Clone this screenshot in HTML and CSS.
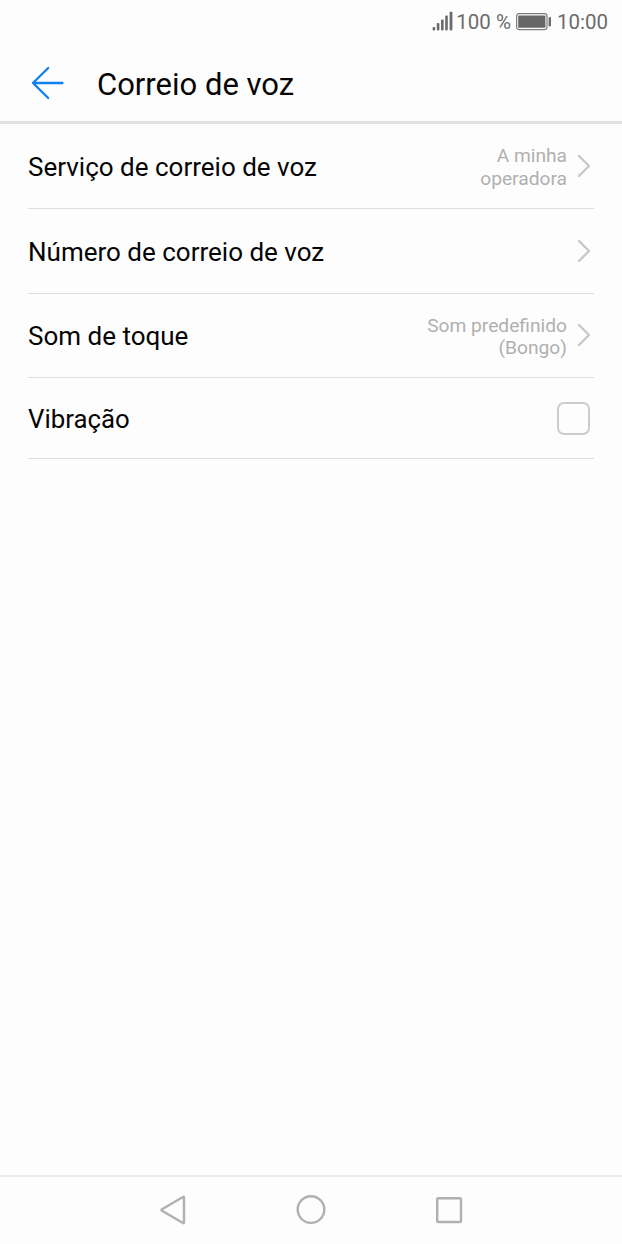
FILE: index.html
```
<!DOCTYPE html>
<html lang="pt">
<head>
  <meta charset="UTF-8" />
  <meta name="viewport" content="width=device-width, initial-scale=1.0" />
  <title>Correio de voz</title>
  <link rel="stylesheet" href="styles.css">
</head>
<body>
  <div class="screen">
    <div class="status-bar">
      <svg class="signal" width="22" height="20" viewBox="0 0 22 20" fill="#6b6b6b">
        <rect x="0.6" y="16" width="2.6" height="3.4" rx="0.8" />
        <rect x="4.8" y="12" width="2.6" height="7.4" rx="0.8" />
        <rect x="9" y="8.4" width="2.6" height="11" rx="0.8" />
        <rect x="13.2" y="4.6" width="2.6" height="14.8" rx="0.8" />
        <rect x="17.6" y="0.8" width="2.8" height="18.6" rx="0.8" />
      </svg>
      <span class="percent">100 %</span>
      <svg class="battery" width="36" height="18" viewBox="0 0 36 18">
        <rect x="0.6" y="0.6" width="30.4" height="16" rx="2.5" fill="none" stroke="#7c7c7c" stroke-width="1.2" />
        <rect x="2.2" y="2.4" width="27.2" height="12.4" rx="0.8" fill="#666" />
        <rect x="32.6" y="4" width="2.4" height="9.4" rx="1" fill="#6b6b6b" />
      </svg>
      <span class="clock">10:00</span>
    </div>

    <header class="header">
      <svg class="back" width="34" height="34" viewBox="0 0 34 34" fill="none" stroke="#107ff0" stroke-width="2.3" stroke-linecap="round" stroke-linejoin="round">
        <path d="M17.2 2L2 17L17.2 32M2 17H31.5" />
      </svg>
      <h1>Correio de voz</h1>
    </header>

    <main class="list">
      <div class="row">
        <span class="label">Serviço de correio de voz</span>
        <span class="value">A minha<br>operadora</span>
        <svg class="chevron" width="14" height="24" viewBox="0 0 14 24"><path d="M2 2L12 12L2 22" /></svg>
      </div>
      <div class="row">
        <span class="label">Número de correio de voz</span>
        <svg class="chevron" width="14" height="24" viewBox="0 0 14 24"><path d="M2 2L12 12L2 22" /></svg>
      </div>
      <div class="row">
        <span class="label">Som de toque</span>
        <span class="value">Som predefinido<br>(Bongo)</span>
        <svg class="chevron" width="14" height="24" viewBox="0 0 14 24"><path d="M2 2L12 12L2 22" /></svg>
      </div>
      <div class="row short">
        <span class="label">Vibração</span>
        <span class="checkbox"></span>
      </div>
    </main>

    <nav class="nav-bar">
      <svg width="30" height="32" viewBox="0 0 30 32"><path d="M26 3.4V28.6Q26 29.6 25 29L4 16.7Q3 16 4 15.3L25 3Q26 2.4 26 3.4Z" /></svg>
      <svg width="32" height="32" viewBox="0 0 32 32"><circle cx="16" cy="15.6" r="13.3" /></svg>
      <svg width="30" height="32" viewBox="0 0 30 32"><rect x="3.2" y="4.2" width="23.8" height="23.8" rx="1" /></svg>
    </nav>
  </div>
</body>
</html>
```
FILE: styles.css
```
* {
  box-sizing: border-box;
}
body {
  margin: 0;
  font-family: Roboto, sans-serif;
  background: #fdfdfd;
  color: #050505;
}
svg {
  display: block;
  flex: none;
}
.screen {
  display: flex;
  flex-direction: column;
  height: 1244px;
}
.status-bar {
  display: flex;
  align-items: center;
  justify-content: flex-end;
  height: 44px;
  padding-right: 14px;
  font-size: 20.5px;
  color: #6b6b6b;
}
.signal {
  margin: 0 2px 3px 0;
}
.battery {
  margin: 0 5px;
}
.header {
  display: flex;
  align-items: center;
  height: 80px;
  padding: 0 31px;
  border-bottom: 3px solid #e1e1e1;
}
h1 {
  margin: 3px 0 0 32px;
  font-size: 31px;
  font-weight: 400;
}
.list {
  flex: 1;
  padding: 0 28px;
}
.row {
  display: flex;
  align-items: center;
  height: 84.8px;
  padding-right: 3px;
  border-bottom: 1px solid #dedede;
}
.row.short {
  height: 80.6px;
  padding-right: 4px;
}
.label {
  flex: 1;
  padding-top: 2px;
  font-size: 26px;
}
.value {
  margin-right: 10px;
  padding-top: 4px;
  font-size: 19.2px;
  line-height: 22.5px;
  text-align: right;
  color: #b0b0b0;
}
.chevron {
  fill: none;
  stroke: #c8c8c8;
  stroke-width: 2.4;
  stroke-linecap: round;
  stroke-linejoin: round;
}
.short .label {
  padding-top: 1px;
  font-size: 25.8px;
}
.checkbox {
  width: 33px;
  height: 33px;
  border: 2px solid #ccc;
  border-radius: 7px;
}
.nav-bar {
  display: flex;
  align-items: center;
  justify-content: center;
  gap: 107px;
  height: 69px;
  padding-bottom: 1px;
  border-top: 2px solid #ebebeb;
}
.nav-bar svg {
  fill: none;
  stroke: #b0b0b0;
  stroke-width: 2.4;
  stroke-linejoin: round;
}
```
